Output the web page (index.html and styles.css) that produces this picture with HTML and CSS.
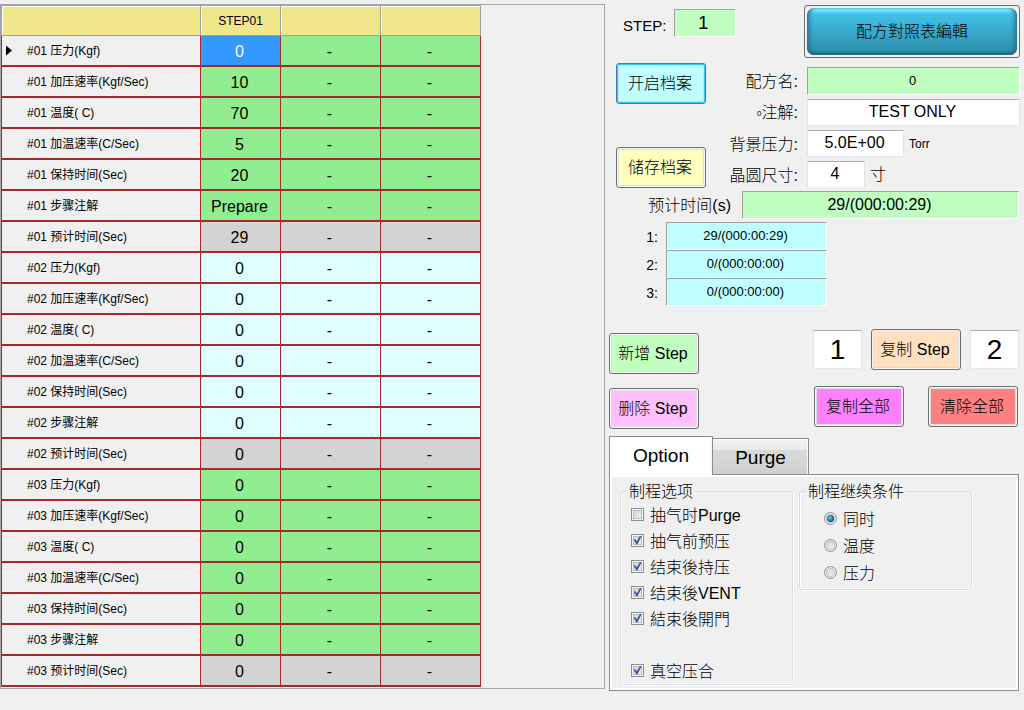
FILE: index.html
```html
<!DOCTYPE html>
<html lang="zh-Hans">
<head>
<meta charset="utf-8">
<title>Recipe</title>
<link rel="stylesheet" href="styles.css">
</head>
<body>
<main class="app">
  <section class="grid-panel">
    <table class="steps">
      <colgroup><col class="c-name"><col class="c-step"><col class="c-more"><col class="c-more"></colgroup>
      <thead><tr><th></th><th>STEP01</th><th></th><th></th></tr></thead>
      <tbody class="green">
        <tr class="current"><th>#01 压力(Kgf)</th><td class="selected">0</td><td>-</td><td>-</td></tr>
        <tr><th>#01 加压速率(Kgf/Sec)</th><td>10</td><td>-</td><td>-</td></tr>
        <tr><th>#01 温度( C)</th><td>70</td><td>-</td><td>-</td></tr>
        <tr><th>#01 加温速率(C/Sec)</th><td>5</td><td>-</td><td>-</td></tr>
        <tr><th>#01 保持时间(Sec)</th><td>20</td><td>-</td><td>-</td></tr>
        <tr><th>#01 步骤注解</th><td>Prepare</td><td>-</td><td>-</td></tr>
        <tr class="total"><th>#01 预计时间(Sec)</th><td>29</td><td>-</td><td>-</td></tr>
      </tbody>
      <tbody class="cyan">
        <tr><th>#02 压力(Kgf)</th><td>0</td><td>-</td><td>-</td></tr>
        <tr><th>#02 加压速率(Kgf/Sec)</th><td>0</td><td>-</td><td>-</td></tr>
        <tr><th>#02 温度( C)</th><td>0</td><td>-</td><td>-</td></tr>
        <tr><th>#02 加温速率(C/Sec)</th><td>0</td><td>-</td><td>-</td></tr>
        <tr><th>#02 保持时间(Sec)</th><td>0</td><td>-</td><td>-</td></tr>
        <tr><th>#02 步骤注解</th><td>0</td><td>-</td><td>-</td></tr>
        <tr class="total"><th>#02 预计时间(Sec)</th><td>0</td><td>-</td><td>-</td></tr>
      </tbody>
      <tbody class="green">
        <tr><th>#03 压力(Kgf)</th><td>0</td><td>-</td><td>-</td></tr>
        <tr><th>#03 加压速率(Kgf/Sec)</th><td>0</td><td>-</td><td>-</td></tr>
        <tr><th>#03 温度( C)</th><td>0</td><td>-</td><td>-</td></tr>
        <tr><th>#03 加温速率(C/Sec)</th><td>0</td><td>-</td><td>-</td></tr>
        <tr><th>#03 保持时间(Sec)</th><td>0</td><td>-</td><td>-</td></tr>
        <tr><th>#03 步骤注解</th><td>0</td><td>-</td><td>-</td></tr>
        <tr class="total"><th>#03 预计时间(Sec)</th><td>0</td><td>-</td><td>-</td></tr>
      </tbody>
    </table>
  </section>

  <section class="side">
    <div class="top-row">
      <div class="step-now"><label for="step">STEP:</label><output id="step" class="readout step-box">1</output></div>
      <button class="glossy" type="button"><span>配方對照表編輯</span></button>
    </div>

    <div class="recipe">
      <div class="file-buttons">
        <button class="btn open" type="button">开启档案</button>
        <button class="btn save" type="button">储存档案</button>
      </div>
      <div class="fields">
        <label for="name">配方名:</label><output id="name" class="readout small">0</output>
        <label for="note"><span class="stub">0</span>注解:</label><input id="note" type="text" value="TEST ONLY">
        <label for="pressure">背景压力:</label><div class="with-unit"><input id="pressure" class="w-pressure" type="text" value="5.0E+00"><span class="unit">Torr</span></div>
        <label for="size">晶圆尺寸:</label><div class="with-unit"><input id="size" class="w-size" type="text" value="4"><span>寸</span></div>
      </div>
    </div>

    <div class="estimate"><label for="total">预计时间(s)</label><output id="total" class="readout">29/(000:00:29)</output></div>
    <div class="parts">
      <label for="p1">1:</label><output id="p1" class="readout part">29/(000:00:29)</output>
      <label for="p2">2:</label><output id="p2" class="readout part">0/(000:00:00)</output>
      <label for="p3">3:</label><output id="p3" class="readout part">0/(000:00:00)</output>
    </div>

    <div class="actions">
      <div class="edit-buttons">
        <button class="btn add" type="button">新增 Step</button>
        <button class="btn remove" type="button">删除 Step</button>
      </div>
      <div class="copy-area">
        <div class="copy-row">
          <input class="num" type="text" value="1" aria-label="From step">
          <button class="btn copy" type="button">复制 Step</button>
          <input class="num" type="text" value="2" aria-label="To step">
        </div>
        <div class="all-row">
          <button class="btn copy-all" type="button">复制全部</button>
          <button class="btn clear-all" type="button">清除全部</button>
        </div>
      </div>
    </div>

    <div class="tabs">
      <div class="tab-strip" role="tablist">
        <button class="tab active" type="button" role="tab" aria-selected="true">Option</button>
        <button class="tab" type="button" role="tab" aria-selected="false">Purge</button>
      </div>
      <div class="tab-body" role="tabpanel">
        <fieldset>
          <legend>制程选项</legend>
          <label class="opt"><input type="checkbox">抽气时Purge</label>
          <label class="opt"><input type="checkbox" checked>抽气前预压</label>
          <label class="opt"><input type="checkbox" checked>结束後持压</label>
          <label class="opt"><input type="checkbox" checked>结束後VENT</label>
          <label class="opt"><input type="checkbox" checked>結束後開門</label>
          <label class="opt apart"><input type="checkbox" checked>真空压合</label>
        </fieldset>
        <fieldset class="conditions">
          <legend>制程继续条件</legend>
          <label class="opt"><input type="radio" name="cond" checked>同时</label>
          <label class="opt"><input type="radio" name="cond">温度</label>
          <label class="opt"><input type="radio" name="cond">压力</label>
        </fieldset>
      </div>
    </div>
  </section>
</main>
</body>
</html>
```

FILE: styles.css
```css
* { box-sizing: border-box; }

body {
  margin: 0;
  background: #f0f0f0;
  color: #000;
  font: 300 16px/20px "Liberation Sans", "Noto Sans CJK SC", sans-serif;
}

button, input { font: inherit; color: inherit; }

.app {
  display: grid;
  grid-template-columns: minmax(0, 605fr) minmax(0, 419fr);
  align-items: start;
  padding-top: 4px;
}

/* Step table */
.grid-panel {
  border: 1px solid #a7a6aa;
  padding-bottom: 1px;
}

.steps {
  table-layout: fixed;
  width: 480px;
  border-collapse: separate;
  border-spacing: 0;
  text-align: center;
}

.c-name { width: 200px; }
.c-step { width: 80px; }
.c-more { width: 100px; }

.steps th, .steps td { padding: 0; height: 31px; }

.steps thead th {
  background: #f0e68c;
  border: solid #a0a0a0;
  border-width: 1px 1px 1px 0;
  box-shadow: inset 1px 1px #fff;
  font-size: 12px;
  font-weight: 400;
}

.steps thead th:first-child { border-left-width: 1px; }

.steps td {
  border: solid #a52a2a;
  border-width: 0 1px 2px 0;
  padding: 2px 2px 0 0;
  line-height: 18px;
}

.steps tbody th {
  border: solid #a52a2a;
  border-width: 0 1px 2px 1px;
  padding-left: 25px;
  font-size: 12px;
  font-weight: 400;
  line-height: 18px;
  text-align: left;
}

.green td { background: #90ee90; }
.cyan td { background: #e0ffff; }
.green .selected { background: #3399ff; color: #fff; }
.steps .total td { background: #d3d3d3; }

.current th::before {
  content: "";
  float: left;
  width: 6px;
  height: 10px;
  margin: 4px 0 0 -21px;
  background: #000;
  clip-path: polygon(0 0, 100% 50%, 0 100%);
}

/* Controls */
.side { padding: 1px 4px 0 4px; }

.readout {
  display: block;
  height: 28px;
  border: 1px solid;
  border-color: #a0a0a0 #fff #fff #a0a0a0;
  padding-right: 2px;
  background: #c0ffc0;
  line-height: 26px;
  text-align: center;
}

input[type="text"] {
  display: block;
  width: 100%;
  height: 27px;
  border: 1px solid;
  border-color: #abadb3 #e2e3ea #e3e9ef #e2e3ea;
  padding: 0 2px 2px 0;
  background: #fff;
  text-align: center;
}

.btn {
  width: 90px;
  height: 41px;
  border: 1px solid #707070;
  border-radius: 3px;
  padding: 1px 2px 0 0;
  box-shadow: inset 0 0 0 1px #f6f6f6, inset 0 0 0 2px #dedede;
  white-space: nowrap;
}

.open {
  border-color: #3c7fb1;
  background: #c0ffff;
  box-shadow: inset 0 0 0 1px #38c4f0, inset 0 0 0 2px #c6e4f2;
}
.save { background: #ffffc0; }
.add { background: #c0ffc0; }
.remove { background: #ffc0ff; }
.copy { background: #ffe0c0; }
.copy-all { background: #ff80ff; }
.clear-all { background: #ff8080; }

.top-row {
  display: flex;
  justify-content: space-between;
  align-items: flex-start;
}

.step-now {
  display: flex;
  align-items: center;
  gap: 8px;
  padding: 4px 0 0 14px;
  font-size: 15px;
}

.step-now label { padding-top: 5px; }
.step-box { width: 62px; padding-right: 4px; font-size: 19px; }

.glossy {
  width: 216px;
  height: 53px;
  border: 1px solid #707070;
  border-radius: 3px;
  padding: 2px;
  background: #f0f0f0;
}

.glossy span {
  display: block;
  height: 47px;
  border-radius: 7px;
  background: linear-gradient(#62dcf8 0, #7aeeff 2px, #42c2e8 6px, #2f90ae 42px, #216378 47px);
  box-shadow: inset 5px 0 5px -3px #236b80, inset -5px 0 5px -3px #236b80;
  line-height: 47px;
}

.recipe {
  display: flex;
  gap: 20px;
  padding: 5px 0 0 7px;
}

.file-buttons {
  display: flex;
  flex-direction: column;
  gap: 43px;
}

.fields {
  flex: 1;
  display: grid;
  grid-template-columns: 72px minmax(0, 1fr);
  gap: 4px 9px;
  align-items: center;
  padding-top: 4px;
}

.fields > label { padding-top: 2px; text-align: right; white-space: nowrap; }
.small { font-size: 13px; }
.stub { font-size: 8px; vertical-align: 2px; }
.with-unit { display: flex; align-items: center; gap: 5px; }
.unit { font-size: 12px; }
input.w-pressure { width: 97px; }
input.w-size { width: 58px; }

.estimate {
  display: grid;
  grid-template-columns: 92px minmax(0, 1fr);
  gap: 11px;
  align-items: center;
  padding: 3px 1px 0 30px;
  white-space: nowrap;
}

.estimate label { padding-top: 2px; text-align: right; }

.parts {
  display: grid;
  grid-template-columns: 12px 161px;
  column-gap: 8px;
  align-items: center;
  padding: 3px 0 0 37px;
  font-size: 14px;
}

.parts label { padding-top: 2px; text-align: right; }
.part { background: #c0ffff; font-size: 13px; }

.actions {
  display: flex;
  justify-content: space-between;
  padding: 23px 1px 0 0;
}

.edit-buttons {
  display: flex;
  flex-direction: column;
  gap: 14px;
  padding-top: 4px;
}

.copy-area {
  display: flex;
  flex-direction: column;
  gap: 16px;
}

.copy-row { display: flex; align-items: center; gap: 9px; }
.copy-row input.num { width: 49px; height: 39px; padding: 0; font-size: 28px; }
.all-row { display: flex; justify-content: space-between; padding: 0 1px; }

/* Tabs */
.tabs { padding: 7px 1px 0 0; }

.tab-strip {
  display: flex;
  align-items: flex-end;
}

.tab {
  width: 96px;
  height: 36px;
  border: 1px solid #898c95;
  border-width: 1px 1px 0 0;
  padding: 2px 0 0;
  background: linear-gradient(#f2f2f2 0, #ebebeb 30%, #dadada 31%, #cfcfcf 100%);
  box-shadow: inset -1px 1px #f8f8f8;
  font-size: 19px;
}

/* The active tab runs into the panel without a dividing line */
.tab.active {
  position: relative;
  width: 104px;
  height: 39px;
  margin-bottom: -1px;
  border-left-width: 1px;
  padding: 0;
  background: #fff;
}

.tab-body {
  display: flex;
  align-items: flex-start;
  gap: 6px;
  border: 1px solid #898c95;
  padding: 7px 7px 5px 10px;
  box-shadow: inset 0 0 0 2px #fff, 1px 1px #fff;
}

fieldset {
  width: 173px;
  margin: 0;
  border: 1px solid #d5dfe5;
  border-radius: 3px;
  padding: 0 10px 1px;
  box-shadow: inset 1px 0 #fff, inset 0 -1px #fff, 1px 0 #fff, 0 1px #fff;
}

legend { margin-left: -4px; padding: 0 2px; line-height: 19px; }

.opt {
  display: flex;
  align-items: center;
  gap: 6px;
  height: 26px;
  padding-top: 3px;
  white-space: nowrap;
}

.apart { margin-top: 26px; }
.conditions { padding: 4px 24px 3px; }
.conditions legend { margin-left: -18px; }
.conditions .opt { height: 27px; }

input[type="checkbox"], input[type="radio"] {
  appearance: none;
  flex: none;
  display: grid;
  place-items: center;
  width: 13px;
  height: 13px;
  margin: 0 0 3px;
  border: 1px solid #8e8f8f;
  background: linear-gradient(135deg, #cbcfd5, #f6f6f6);
  box-shadow: inset 0 0 0 1px #f4f4f4, inset 0 0 0 2px #b9bec5;
}

input[type="checkbox"]:checked::before {
  content: "";
  width: 9px;
  height: 9px;
  background: #42589c;
  clip-path: polygon(8% 48%, 24% 40%, 42% 64%, 78% 2%, 98% 2%, 50% 96%, 36% 96%);
}

input[type="radio"] { border-radius: 50%; }

input[type="radio"]:checked::before {
  content: "";
  width: 7px;
  height: 7px;
  border-radius: 50%;
  background: radial-gradient(circle at 40% 40%, #5fd0f5, #14709c 55%, #0c3450);
}
```
